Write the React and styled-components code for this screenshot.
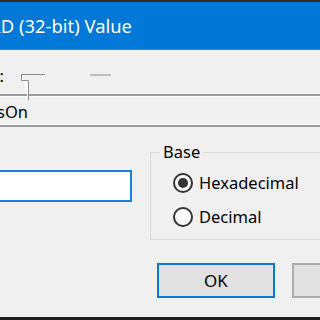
import React from "react";
import styled, { createGlobalStyle } from "styled-components";

const GlobalStyle = createGlobalStyle`
  html, body {
    margin: 0;
    padding: 0;
    background: #f0f0f0;
    overflow: hidden;
  }
  body {
    font-family: "Noto Sans", "Open Sans", sans-serif;
  }
`;

const Dialog = styled.div`
  width: 320px;
  height: 320px;
  display: flex;
  flex-direction: column;
  background: #f0f0f0;
  overflow: hidden;
  color: #000;
  font-size: 16.5px;
`;

const TopEdge = styled.div`
  height: 2px;
  background: #2b2b2b;
  flex: none;
`;

const TitleBar = styled.div`
  height: 47px;
  flex: none;
  display: flex;
  align-items: center;
  background: #0078d7;
  border-bottom: 1px solid #2a8ce0;
`;

// Text ends at a fixed x; whatever does not fit is clipped on the left
const ClipRight = styled.div`
  width: ${(p) => p.$w}px;
  display: flex;
  justify-content: flex-end;
  overflow: hidden;
  white-space: nowrap;
  flex: none;
`;

const TitleText = styled.span`
  color: #fff;
  font-size: 18.4px;
  line-height: 22px;
`;

const Body = styled.div`
  flex: 1;
  display: flex;
  flex-direction: column;
  position: relative;
`;

const NameRow = styled.div`
  height: 44px;
  padding-top: 16px;
  box-sizing: border-box;
  position: relative;
  line-height: 20px;
`;

const Marks = styled.svg`
  position: absolute;
  left: 0;
  top: 0;
  overflow: visible;
`;

const NameField = styled.div`
  height: 33px;
  box-sizing: border-box;
  margin: 0 -4px;
  padding: 6px 0 0 4px;
  border-top: 2px solid #9d9d9d;
  border-bottom: 2px solid #9d9d9d;
  box-shadow: inset 0 1px #fff, inset 0 -1px #fff;
  line-height: 20px;
`;

const DataSection = styled.div`
  display: flex;
  align-items: flex-start;
`;

const EditBox = styled.div`
  width: 142px;
  height: 32px;
  margin: 43px 0 0 -10px;
  box-sizing: border-box;
  border: 2px solid #1a7fdb;
  background: #fff;
  flex: none;
`;

const GroupBox = styled.fieldset`
  margin: 15px 0 0 18px;
  padding: 9px 0 0 22px;
  width: 220px;
  height: 98px;
  box-sizing: border-box;
  border: 1px solid #dcdcdc;
  flex: none;
  display: flex;
  flex-direction: column;
  gap: 9.5px;
`;

const Legend = styled.legend`
  margin-left: -13px;
  padding: 0 3px;
  line-height: 20px;
`;

const RadioRow = styled.label`
  height: 24px;
  display: flex;
  align-items: center;
  gap: 6px;
  line-height: 20px;
`;

const RadioMark = styled.span`
  width: 20px;
  height: 20px;
  box-sizing: border-box;
  border-radius: 50%;
  border: 2px solid #333;
  background: #fff;
  display: flex;
  align-items: center;
  justify-content: center;
  flex: none;
  &::after {
    content: "";
    width: 10px;
    height: 10px;
    border-radius: 50%;
    background: ${(p) => (p.$checked ? "#333" : "transparent")};
  }
`;

const ButtonRow = styled.div`
  display: flex;
  gap: 17px;
  margin-top: 23px;
  padding-left: 157px;
`;

const Button = styled.button`
  width: 118px;
  height: 35px;
  flex: none;
  box-sizing: border-box;
  background: #e1e1e1;
  border: 2px solid ${(p) => (p.$focus ? "#0a78d7" : "#adadad")};
  font-family: inherit;
  font-size: 17px;
  color: #000;
  padding: 0;
`;

const BottomEdge = styled.div`
  margin-top: auto;
  height: 3px;
  background: #1f1f1f;
  flex: none;
`;

export default function App() {
  return (
    <>
      <GlobalStyle />
      <Dialog>
        <TopEdge />
        <TitleBar>
          <ClipRight $w={132}>
            <TitleText>Edit DWORD (32-bit) Value</TitleText>
          </ClipRight>
        </TitleBar>
        <Body>
          <NameRow>
            <ClipRight $w={4}>
              <span>Value name:</span>
            </ClipRight>
            <Marks width="120" height="60">
              <path d="M21.5 24.5 H45" stroke="#8c8c8c" fill="none" />
              <path
                d="M21.5 24.5 V30.5 H28.5 V50"
                stroke="#8c8c8c"
                fill="#fff"
              />
              <path d="M90 25 H111" stroke="#8c8c8c" fill="none" />
            </Marks>
          </NameRow>
          <NameField>
            <ClipRight $w={28}>
              <span>ShowStatusOn</span>
            </ClipRight>
          </NameField>
          <DataSection>
            <EditBox />
            <GroupBox>
              <Legend>Base</Legend>
              <RadioRow>
                <RadioMark $checked />
                Hexadecimal
              </RadioRow>
              <RadioRow>
                <RadioMark />
                Decimal
              </RadioRow>
            </GroupBox>
          </DataSection>
          <ButtonRow>
            <Button $focus>OK</Button>
            <Button>Cancel</Button>
          </ButtonRow>
          <BottomEdge />
        </Body>
      </Dialog>
    </>
  );
}
